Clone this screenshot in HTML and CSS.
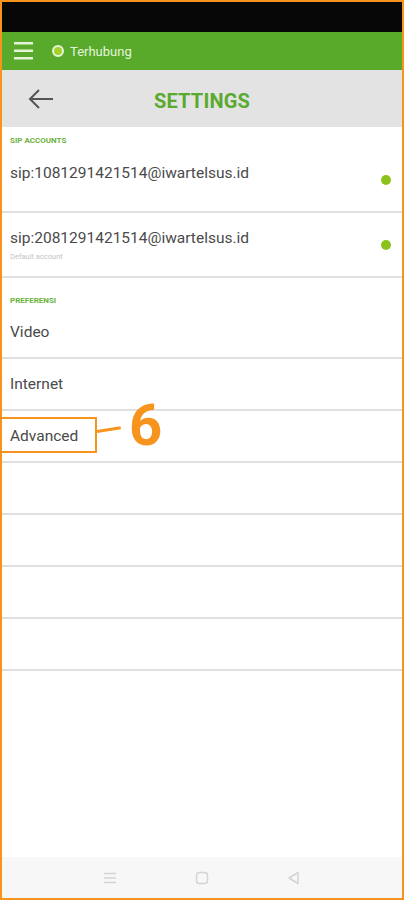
FILE: index.html
```html
<!DOCTYPE html>
<html lang="en">

<head>
    <meta name="viewport" content="width=device-width, initial-scale=1.0">
    <link rel="stylesheet" href="styles.css">
</head>

<body>
    <div class="frame">
        <div class="status-bar"></div>

        <div class="app-bar">
            <svg class="menu-icon" width="20" height="20" viewBox="0 0 20 20">
                <rect x="0" y="1" width="19" height="2.5" fill="#e4f3d8" />
                <rect x="0" y="8.5" width="19" height="2.5" fill="#e4f3d8" />
                <rect x="0" y="16" width="19" height="2.5" fill="#e4f3d8" />
            </svg>
            <span class="status-dot"></span>
            <span class="status-text">Terhubung</span>
        </div>

        <div class="header">
            <svg class="back-icon" width="26" height="22" viewBox="0 0 26 22">
                <path d="M25 11 H2 M11 2 L2 11 L11 20" fill="none" stroke="#555" stroke-width="2" />
            </svg>
            <h1>SETTINGS</h1>
        </div>

        <div class="list">
            <div class="section-title first">SIP ACCOUNTS</div>
            <div class="account-row">
                <div class="account-info">
                    <div class="row-text">sip:1081291421514@iwartelsus.id</div>
                </div>
                <span class="online-dot"></span>
            </div>
            <div class="account-row">
                <div class="account-info">
                    <div class="row-text">sip:2081291421514@iwartelsus.id</div>
                    <div class="row-sub">Default account</div>
                </div>
                <span class="online-dot"></span>
            </div>

            <div class="section-title">PREFERENSI</div>
            <div class="row"><span class="row-text">Video</span></div>
            <div class="row"><span class="row-text">Internet</span></div>
            <div class="row advanced">
                <span class="row-text">Advanced</span>
                <!-- tutorial callout -->
                <div class="callout-box"></div>
                <div class="callout-line"></div>
                <div class="callout-num">6</div>
            </div>
            <div class="row"></div>
            <div class="row"></div>
            <div class="row"></div>
            <div class="row"></div>
        </div>

        <div class="nav-bar">
            <svg width="14" height="12" viewBox="0 0 14 12">
                <path d="M1 1.5 H13 M1 6 H13 M1 10.5 H13" stroke="#d4d4d4" stroke-width="1.5" />
            </svg>
            <svg width="14" height="14" viewBox="0 0 14 14">
                <rect x="1.5" y="1.5" width="11" height="11" rx="3" fill="none" stroke="#d4d4d4" stroke-width="1.5" />
            </svg>
            <svg width="14" height="14" viewBox="0 0 14 14">
                <path d="M11 1.5 L2 7 L11 12.5 Z" fill="none" stroke="#d4d4d4" stroke-width="1.5" stroke-linejoin="round" />
            </svg>
        </div>
    </div>
</body>

</html>
```

FILE: styles.css
```css
body {
    margin: 0;
    font-family: Roboto, "Liberation Sans", sans-serif;
    background: #fff;
}

.frame {
    box-sizing: border-box;
    width: 404px;
    height: 900px;
    border: 2px solid #f7941d;
    display: flex;
    flex-direction: column;
    overflow: hidden;
}

.status-bar {
    height: 30px;
    background: #070707;
}

.app-bar {
    height: 38px;
    background: #59aa2b;
    display: flex;
    align-items: center;
    padding-left: 12px;
}

.menu-icon {
    margin-right: 18px;
}

.status-dot {
    box-sizing: border-box;
    width: 12px;
    height: 12px;
    border-radius: 50%;
    border: 2px solid #e6f4dc;
    background: #a5d12a;
    margin-right: 6px;
}

.status-text {
    color: #e6f4dc;
    font-size: 13px;
}

.header {
    height: 57px;
    background: #e3e3e3;
    display: flex;
    align-items: center;
    position: relative;
}

.back-icon {
    margin-left: 26px;
}

.header h1 {
    margin: 0;
    position: absolute;
    left: 0;
    right: 0;
    top: 19px;
    text-align: center;
    font-size: 20px;
    font-weight: bold;
    color: #5aaa2f;
    letter-spacing: 0.2px;
}

.list {
    flex: 1;
}

.section-title {
    box-sizing: border-box;
    height: 29px;
    padding: 18px 0 0 8px;
    font-size: 8px;
    font-weight: bold;
    color: #6bb33e;
}

.section-title.first {
    height: 21px;
    padding-top: 9px;
}

.account-row {
    box-sizing: border-box;
    height: 65px;
    border-bottom: 2px solid #e0e0e0;
    display: flex;
    align-items: center;
    padding: 0 11px 0 8px;
}

.account-info {
    flex: 1;
    align-self: flex-start;
    padding-top: 16px;
}

.row-text {
    font-size: 15.5px;
    color: #4a4a4a;
}

.row-sub {
    font-size: 7.5px;
    color: #c4c4c4;
    margin-top: 5px;
}

.online-dot {
    width: 10px;
    height: 10px;
    border-radius: 50%;
    background: #8cc21c;
}

.row {
    box-sizing: border-box;
    height: 52px;
    border-bottom: 2px solid #e0e0e0;
    display: flex;
    align-items: center;
    padding-left: 8px;
}

.advanced {
    position: relative;
}

.callout-box {
    position: absolute;
    left: -2px;
    top: 6px;
    width: 97px;
    height: 36px;
    box-sizing: border-box;
    border: 2px solid #f7941d;
}

.callout-line {
    position: absolute;
    left: 95px;
    top: 19px;
    width: 24px;
    height: 3px;
    background: #f7941d;
    transform: rotate(-9deg);
    transform-origin: left center;
}

.callout-num {
    position: absolute;
    left: 127px;
    top: -15px;
    font-size: 58px;
    font-weight: bold;
    color: #f7941d;
    line-height: 1;
}

.nav-bar {
    height: 41px;
    background: #f7f7f7;
    display: flex;
    align-items: center;
    justify-content: center;
    gap: 78px;
}
```
